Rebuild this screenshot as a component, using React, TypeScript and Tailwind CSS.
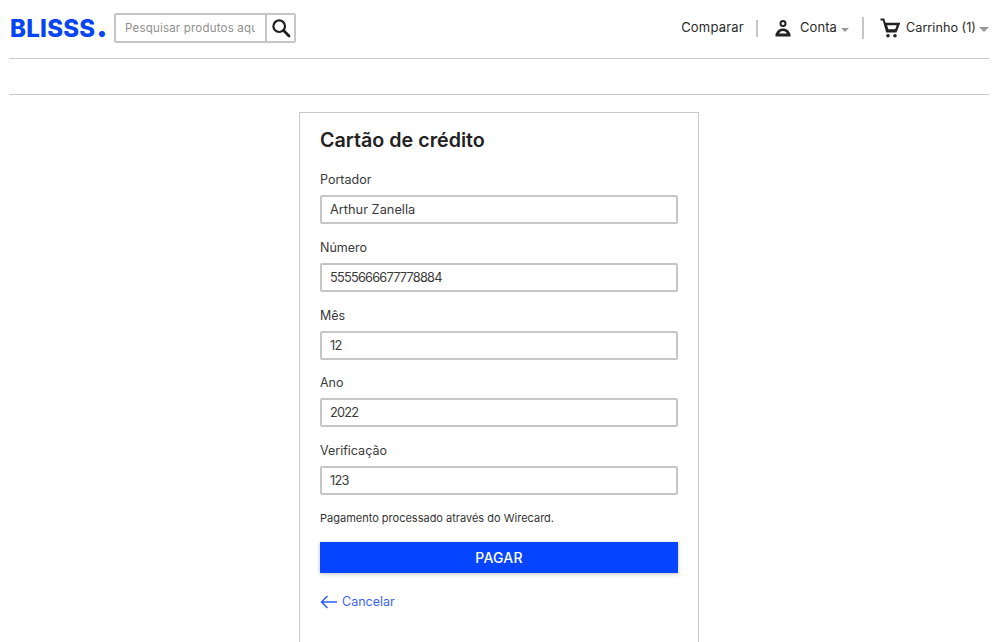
const font = "font-['Inter','Liberation_Sans',sans-serif]";

function Field({ label, value, mt, numeric }: { label: string; value: string; mt: string; numeric?: boolean }) {
  return (
    <div className={`flex flex-col ${mt}`}>
      <label className="h-[18px] text-[12.5px] leading-[20px] text-[#3a3a3a]">{label}</label>
      <input
        readOnly
        value={value}
        className={`mt-[7px] h-[29px] w-[358px] rounded-[2px] border-2 border-[#c6c6c6] bg-white pl-[8px] pr-[8px] pb-[1px] text-[12.8px] text-[#3a3a3a] outline-none ${numeric ? "tracking-[-0.8px]" : "tracking-[0px]"}`}
      />
    </div>
  );
}

export default function App() {
  return (
    <div className={`h-[642px] overflow-hidden bg-white pl-[9px] pr-[10px] ${font}`}>
      <header className="flex h-[59px] items-start border-b border-[#c9c9c9]">
        <div className="mt-[13px] flex h-[30px] w-full items-center">
          <span className="ml-[1px] w-[104px] shrink-0 whitespace-nowrap text-[24px] font-extrabold leading-[30px] tracking-[0.25px] text-[#0645f5]">
            BLISSS<span className="ml-[2px] font-['Lato',sans-serif] text-[37px] font-black leading-[20px]">.</span>
          </span>
          <div className="flex h-[30px] w-[182px] rounded-[2px] border-2 border-[#c6c6c6]">
            <input
              readOnly
              placeholder="Pesquisar produtos aqui"
              className="h-full w-[151px] min-w-0 border-r-2 border-[#c6c6c6] bg-white pl-[9px] pr-[10px] text-[11.5px] tracking-[0.2px] text-[#333] outline-none placeholder:text-[#8f8f8f]"
            />
            <div className="flex flex-1 items-center justify-center">
              <svg width="20" height="20" viewBox="0 0 20 20" fill="none" stroke="#1f1f1f">
                <circle cx="8.2" cy="8.2" r="5.8" strokeWidth="2.2" />
                <path d="M12.6 12.6 L18 18" strokeWidth="2.8" strokeLinecap="round" />
              </svg>
            </div>
          </div>
          <div className="ml-auto flex items-center text-[13px] text-[#2a2a2a]">
            <span className="tracking-[0.2px]">Comparar</span>
            <span className="ml-[12px] h-[17px] w-[2px] bg-[#c6c6c6]" />
            <svg className="ml-[17px]" width="16" height="18" viewBox="0 0 16 18">
              <circle cx="8" cy="4.4" r="2.5" fill="none" stroke="#222" strokeWidth="2" />
              <path fill="#222" d="M0.5 17.5 V15.5 C2 11 5 9.5 8 9.5 C11 9.5 14 11 15.5 15.5 V17.5 Z" />
              <path fill="#fff" d="M4 14.6 C5 12.8 6.5 12 8 12 C9.5 12 11 12.8 12 14.6 Z" />
            </svg>
            <span className="ml-[9px] tracking-[0.1px]">Conta</span>
            <span className="ml-[4px] mt-[3px] h-0 w-0 border-x-[4px] border-t-[4px] border-x-transparent border-t-[#999]" />
            <span className="ml-[13px] h-[22px] w-[2px] bg-[#c6c6c6]" />
            <svg className="ml-[16px]" width="20" height="20" viewBox="0 0 20 20" fill="none" stroke="#222">
              <path d="M0.5 1.5 H3.5 L7 13.5 H16.5" strokeWidth="2" />
              <path d="M5.5 6 H18.5 L16 12.5 H7.5 Z" strokeWidth="2.4" />
              <circle cx="8" cy="17.8" r="1.8" fill="#222" stroke="none" />
              <circle cx="15" cy="17.8" r="1.8" fill="#222" stroke="none" />
            </svg>
            <span className="ml-[6px] text-[12.7px]">Carrinho (1)</span>
            <span className="ml-[3px] mt-[3px] h-0 w-0 border-x-[5px] border-t-[5px] border-x-transparent border-t-[#999]" />
          </div>
        </div>
      </header>
      <div className="h-[36px] border-b border-[#c9c9c9]" />
      <main className="mt-[17px] flex justify-center">
        <section className="h-[560px] w-[400px] border border-[#c9c9c9] px-[20px]">
          <h1 className="mt-[14px] h-[26px] text-[19.7px] font-semibold leading-[26px] text-[#222]">Cartão de crédito</h1>
          <Field label="Portador" value="Arthur Zanella" mt="mt-[17px]" />
          <Field label="Número" value="5555666677778884" mt="mt-[14px]" numeric />
          <Field label="Mês" value="12" mt="mt-[14px]" numeric />
          <Field label="Ano" value="2022" mt="mt-[13px]" numeric />
          <Field label="Verificação" value="123" mt="mt-[14px]" numeric />
          <p className="mt-[15px] h-[16px] text-[11px] leading-[16px] text-[#333]">Pagamento processado através do Wirecard.</p>
          <button className="mt-[16px] h-[31px] w-[358px] bg-[#0645ff] text-[14px] font-medium tracking-[0.2px] text-white shadow-[0_1px_4px_rgba(0,0,0,0.25)]">PAGAR</button>
          <div className="mt-[20px] flex items-center text-[12.5px] text-[#3b63f5]">
            <svg width="17" height="14" viewBox="0 0 17 14" fill="none" stroke="#2f5bf5" strokeWidth="1.5">
              <path d="M17 7 H1.5 M7.5 1 L1.5 7 L7.5 13" />
            </svg>
            <span className="ml-[5px]">Cancelar</span>
          </div>
        </section>
      </main>
    </div>
  );
}
